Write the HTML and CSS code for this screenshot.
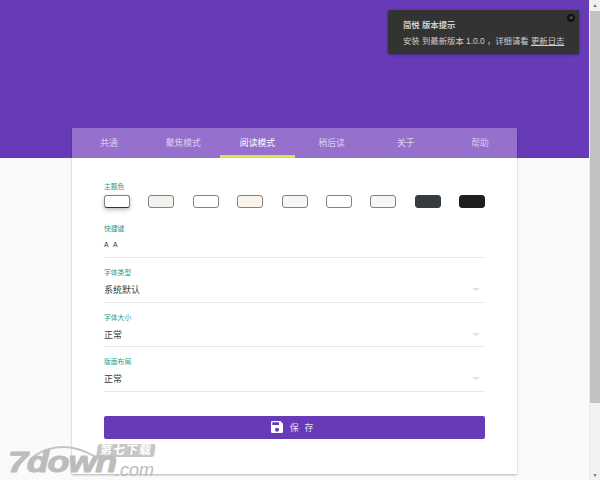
FILE: index.html
```html
<!DOCTYPE html>
<html lang="zh-CN">

<head>
    <meta charset="UTF-8">
    <title>简悦 选项</title>
    <link rel="stylesheet" href="styles.css">
</head>

<body>
    <div class="page">
        <div class="header"></div>
        <div class="content">
            <div class="card">
                <div class="tabs">
                    <div class="tab">共通</div>
                    <div class="tab">聚焦模式</div>
                    <div class="tab active">阅读模式</div>
                    <div class="tab">稍后读</div>
                    <div class="tab">关于</div>
                    <div class="tab">帮助</div>
                </div>
                <div class="panel">
                    <div class="label">主题色</div>
                    <div class="swatches">
                        <div class="swatch selected"></div>
                        <div class="swatch sand"></div>
                        <div class="swatch"></div>
                        <div class="swatch cream"></div>
                        <div class="swatch mist"></div>
                        <div class="swatch"></div>
                        <div class="swatch mist"></div>
                        <div class="swatch slate"></div>
                        <div class="swatch black"></div>
                    </div>
                    <div class="keys">
                        <div class="label">快捷键</div>
                        <div class="value mono">A A</div>
                    </div>
                    <div class="field">
                        <div class="label">字体类型</div>
                        <div class="value">系统默认<span class="arrow"></span></div>
                    </div>
                    <div class="field">
                        <div class="label">字体大小</div>
                        <div class="value">正常<span class="arrow"></span></div>
                    </div>
                    <div class="field">
                        <div class="label">版面布局</div>
                        <div class="value">正常<span class="arrow"></span></div>
                    </div>
                    <div class="save">
                        <svg class="save-icon" viewBox="0 0 24 24" width="16" height="16">
                            <path fill="#fff" d="M17 3H5a2 2 0 0 0-2 2v14a2 2 0 0 0 2 2h14a2 2 0 0 0 2-2V7l-4-4zm-5 16a3 3 0 1 1 0-6 3 3 0 0 1 0 6zm3-10H5V5h10v4z"/>
                        </svg>
                        <span>保 存</span>
                    </div>
                </div>
            </div>
        </div>

        <div class="notice">
            <span class="notice-close">×</span>
            <div class="notice-title">简悦 版本提示</div>
            <div class="notice-text">安装 到最新版本 1.0.0 ，详细请看 <u>更新日志</u></div>
        </div>

        <div class="watermark">
            <svg class="wm-arc" viewBox="0 0 100 20" width="100" height="20">
                <path fill="none" stroke="#c4c4c4" stroke-width="2" d="M26 13Q54 -5 86 13"/>
            </svg>
            <span class="wm-cn">第七下载</span>
            <span class="wm-logo">7down</span>
            <span class="wm-com">.com</span>
        </div>
    </div>

    <div class="scrollbar">
        <div class="sb-btn">▲</div>
        <div class="sb-track"><div class="sb-thumb"></div></div>
        <div class="sb-btn">▼</div>
    </div>
</body>

</html>
```

FILE: styles.css
```css
html, body {
    height: 100%;
}

body {
    font-family: "Liberation Sans", "Noto Sans CJK SC", sans-serif;
    margin: 0;
    display: flex;
    height: 480px;
    overflow: hidden;
    background-color: #fafafa;
}

.page {
    flex: 1;
    position: relative;
    overflow: hidden;
    border-right: 1px solid #ececec;
}

.header {
    height: 158px;
    background-color: #673ab7;
}

.content {
    margin-top: -30px;
    padding-left: 72px;
}

.card {
    width: 445px;
    height: 346px;
    background-color: #fff;
    box-shadow: 0 1px 2px rgba(0, 0, 0, 0.3);
}

.tabs {
    display: flex;
    height: 30px;
    background-color: #9570cd;
}

.tab {
    flex: 1;
    text-align: center;
    line-height: 30px;
    font-size: 8.8px;
    color: #dccfee;
    box-sizing: border-box;
}

.tab.active {
    color: #fff;
    border-bottom: 3px solid #dfe04c;
}

.panel {
    padding: 24px 32px 0;
}

.label {
    font-size: 6.8px;
    line-height: 10px;
    color: #2d9c8c;
}

.swatches {
    display: flex;
    justify-content: space-between;
    margin-top: 3px;
}

.swatch {
    width: 26px;
    height: 13px;
    box-sizing: border-box;
    border: 1px solid #828282;
    border-radius: 3px;
    background-color: #fff;
}

.swatch.selected {
    border-bottom-color: #333;
    box-shadow: 0 2px 4px rgba(0, 0, 0, 0.25);
}

.swatch.sand {
    background-color: #f3f2ee;
}

.swatch.cream {
    background-color: #faf4ec;
}

.swatch.mist {
    background-color: #f6f6f6;
}

.swatch.slate {
    background-color: #363b40;
    border-color: #363b40;
}

.swatch.black {
    background-color: #1f1f1f;
    border-color: #1f1f1f;
}

.keys {
    margin-top: 16px;
}

.field {
    padding-top: 10px;
}

.value {
    position: relative;
    height: 23.67px;
    line-height: 24px;
    font-size: 9px;
    color: #3c3c3c;
    border-bottom: 1px solid #e8e8e8;
}

.value.mono {
    font-family: "Liberation Mono", monospace;
    font-size: 7.5px;
    height: 23px;
    line-height: 23px;
}

.arrow {
    position: absolute;
    right: 5px;
    top: 10px;
    width: 0;
    height: 0;
    border-left: 4px solid transparent;
    border-right: 4px solid transparent;
    border-top: 3px solid #e0e0e0;
}

.save {
    display: flex;
    align-items: center;
    justify-content: center;
    gap: 5px;
    height: 23px;
    margin-top: 24px;
    padding-right: 5px;
    background-color: #673ab7;
    border-radius: 2px;
    color: #e6dcf4;
    font-size: 9px;
}

.save span {
    letter-spacing: 1.7px;
}

.notice {
    position: absolute;
    left: 388px;
    top: 10px;
    width: 191px;
    height: 44px;
    box-sizing: border-box;
    padding: 7px 0 0 15px;
    background-color: #333;
    border-radius: 2px;
    box-shadow: 0 1px 3px rgba(0, 0, 0, 0.4);
    color: #cfcfcf;
    font-size: 8.35px;
    line-height: 16px;
    white-space: nowrap;
}

.notice-title {
    font-weight: bold;
}

.notice-close {
    position: absolute;
    right: 4px;
    top: 4px;
    width: 8px;
    height: 8px;
    line-height: 7px;
    text-align: center;
    border-radius: 50%;
    background-color: #111;
    color: #777;
    font-size: 8px;
}

.watermark {
    position: absolute;
    left: 8px;
    top: 443px;
    width: 150px;
    height: 37px;
    color: #bcbcbc;
}

.wm-arc {
    position: absolute;
    left: 0;
    top: 0;
}

.wm-cn {
    position: absolute;
    left: 89px;
    top: 1px;
    width: 58px;
    background-color: #c6c6c6;
    border-radius: 3px;
    color: #fff;
    font-size: 12px;
    line-height: 13px;
    font-weight: bold;
    text-align: center;
    letter-spacing: 1px;
    white-space: nowrap;
    transform: skewX(-8deg);
}

.wm-logo {
    position: absolute;
    left: 0;
    top: 4px;
    font-size: 30px;
    line-height: 30px;
    font-weight: bold;
    font-style: italic;
    letter-spacing: -1px;
    white-space: nowrap;
    -webkit-text-stroke: 1px #bcbcbc;
    transform: scaleX(1.2);
    transform-origin: left top;
}

.wm-com {
    position: absolute;
    left: 107px;
    top: 17px;
    font-size: 18px;
    line-height: 20px;
    font-style: italic;
    white-space: nowrap;
}

.scrollbar {
    width: 10px;
    display: flex;
    flex-direction: column;
    background-color: #f1f1f1;
}

.sb-btn {
    height: 10px;
    font-size: 5px;
    line-height: 10px;
    text-align: center;
    color: #666;
}

.sb-track {
    flex: 1;
    padding-top: 1px;
}

.sb-thumb {
    height: 392px;
    background-color: #c1c1c1;
}
```
